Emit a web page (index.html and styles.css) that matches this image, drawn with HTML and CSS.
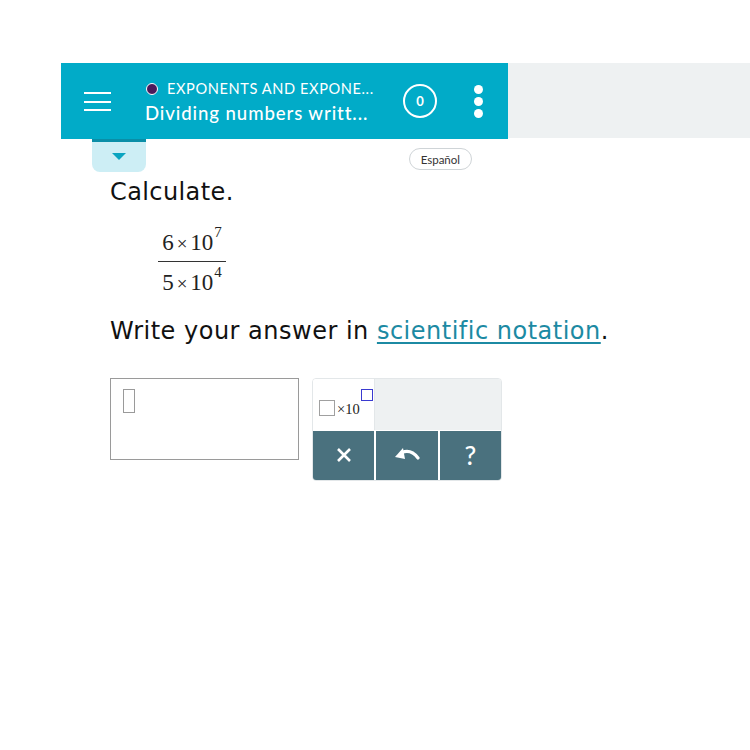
FILE: index.html
```html
<!DOCTYPE html>
<html>
<head>
<meta charset="utf-8">
<link rel="stylesheet" href="styles.css">
</head>
<body>
<div class="page">
  <div class="topbar">
    <div class="header">
      <div class="hamburger"><span></span><span></span><span></span></div>
      <div class="titles">
        <div class="unit"><span class="dot"></span>EXPONENTS AND EXPONE...</div>
        <div class="lesson">Dividing numbers writt...</div>
      </div>
      <div class="score">0</div>
      <div class="more"><span></span><span></span><span></span></div>
    </div>
    <div class="side"></div>
  </div>
  <div class="subbar">
    <div class="tab"><span class="tri"></span></div>
    <div class="lang">Español</div>
  </div>
  <div class="content">
    <div class="prompt">Calculate.</div>
    <div class="frac">
      <div class="num">6<span class="times">×</span>10<sup>7</sup></div>
      <div class="bar"></div>
      <div class="den">5<span class="times">×</span>10<sup>4</sup></div>
    </div>
    <div class="instr">Write your answer in <a href="#" class="link">scientific notation</a>.</div>
    <div class="answer-row">
      <div class="answer"><span class="caret"></span></div>
      <div class="keypad">
        <div class="keyrow top">
          <div class="key sci"><span class="box"></span><span class="x10">×10</span><span class="exp"></span></div>
          <div class="key blank"></div>
        </div>
        <div class="keyrow bottom">
          <div class="key btn">
            <svg width="16" height="16" viewBox="0 0 16 16"><path d="M2 2 L14 14 M14 2 L2 14" stroke="#fff" stroke-width="2.6" stroke-linecap="butt"/></svg>
          </div>
          <div class="key btn">
            <svg width="26" height="16" viewBox="0 0 26 16"><path d="M8 5.5 C13 3.5 19 4.5 24 11" stroke="#fff" stroke-width="3.2" fill="none" stroke-linecap="round"/><path d="M1 10 L9 1 L11 12 Z" fill="#fff"/></svg>
          </div>
          <div class="key btn q">?</div>
        </div>
      </div>
    </div>
  </div>
</div>
</body>
</html>
```
FILE: styles.css
```css
* { box-sizing: border-box; }
body { margin: 0; background: #fff; }
.page { padding-top: 63px; width: 750px; }
.topbar { display: flex; height: 76px; }
.header {
  margin-left: 61px; width: 447px; height: 76px; background: #01abc8;
  display: flex; align-items: center; padding-left: 23px; position: relative;
}
.side { flex: 1; height: 75px; background: #eef1f2; }
.hamburger { width: 27px; display: flex; flex-direction: column; gap: 6.5px; margin-top: 1px; }
.hamburger span { display: block; height: 2px; background: #fff; }
.titles { margin-left: 34px; width: 240px; font-family: "Lato", "Open Sans", sans-serif; color: #fff; margin-top: 2px; }
.unit { font-size: 14.6px; letter-spacing: 0.6px; display: flex; align-items: center; padding-left: 1px; line-height: 18px; }
.dot { width: 12px; height: 12px; border-radius: 50%; background: #4b1a5b; border: 1.5px solid #fff; margin-right: 9px; }
.lesson { font-size: 18.6px; letter-spacing: 0.9px; margin-top: 4px; font-weight: 500; line-height: 22px; }
.score {
  margin-left: 18px; width: 34px; height: 34px; border-radius: 50%; border: 2.5px solid #fff;
  color: #fff; font-family: "Lato", sans-serif; font-weight: 700; font-size: 13px;
  display: flex; align-items: center; justify-content: center;
}
.more { margin-left: 37px; display: flex; flex-direction: column; gap: 3px; margin-top: 1px; }
.more span { width: 9px; height: 9px; border-radius: 50%; background: #fff; }
.subbar { display: flex; margin-left: 92px; width: 380px; justify-content: space-between; align-items: flex-start; }
.tab {
  width: 54px; height: 33px; background: #cdeef5; border-top: 3px solid #0a8ea7;
  border-radius: 0 0 8px 8px; display: flex; justify-content: center; padding-top: 11px;
}
.tri { width: 0; height: 0; border-left: 7px solid transparent; border-right: 7px solid transparent; border-top: 7px solid #0aa4c0; }
.lang {
  margin-top: 9px; height: 22px; padding: 0 11px; border: 1px solid #cfd4d7; border-radius: 11px;
  font-family: "Lato", sans-serif; font-size: 11.5px; color: #333; display: flex; align-items: center;
}
.content { margin-left: 110px; margin-top: 6px; font-family: "DejaVu Sans", Verdana, sans-serif; color: #111; }
.prompt { font-size: 24px; line-height: 28px; letter-spacing: 0.4px; }
.frac { margin-left: 48px; margin-top: 17px; display: inline-flex; flex-direction: column; align-items: center; font-family: "Liberation Serif", serif; font-size: 23px; color: #222; }
.frac sup { font-size: 15px; position: relative; top: -4px; margin-left: 1px; }
.times { font-size: 19px; margin: 0 3px; }
.num { line-height: 26px; }
.bar { width: 68px; height: 1.5px; background: #333; margin: 4px 0 1px; }
.den { line-height: 26px; }
.instr { font-size: 24px; margin-top: 20px; line-height: 28px; letter-spacing: 0.5px; }
.link { color: #1c8aa3; text-decoration: underline; text-underline-offset: 3px; text-decoration-thickness: 1.5px; }
.answer-row { display: flex; margin-top: 33px; gap: 13px; align-items: flex-start; }
.answer { width: 189px; height: 82px; border: 1.5px solid #9a9a9a; padding: 10px 0 0 12px; }
.caret { display: block; width: 12px; height: 24px; border: 1.5px solid #9a9a9a; }
.keypad { width: 190px; border-radius: 4px; overflow: hidden; border: 1px solid #e3e7e9; background: #fff; }
.keyrow { display: flex; }
.keyrow.top { height: 51px; }
.key.sci { width: 62px; background: #fff; display: flex; align-items: flex-end; padding: 0 0 14px 6px; position: relative; border-right: 1px solid #e3e7e9; }
.box { width: 16px; height: 16px; border: 1.5px solid #a0a0a0; }
.x10 { font-family: "Liberation Serif", serif; font-size: 14.5px; margin-left: 2px; line-height: 14px; color: #222; }
.exp { position: absolute; left: 48px; top: 10px; width: 12px; height: 12px; border: 1.5px solid #3a3ad0; }
.key.blank { flex: 1; background: #eef1f2; }
.keyrow.bottom { height: 50px; gap: 2px; border-top: 1px solid #fff; }
.key.btn { flex: 1; background: #4a717e; display: flex; align-items: center; justify-content: center; color: #fff; }
.key.q { font-family: "Lato", "DejaVu Sans", sans-serif; font-size: 26px; font-weight: 500; }
```
